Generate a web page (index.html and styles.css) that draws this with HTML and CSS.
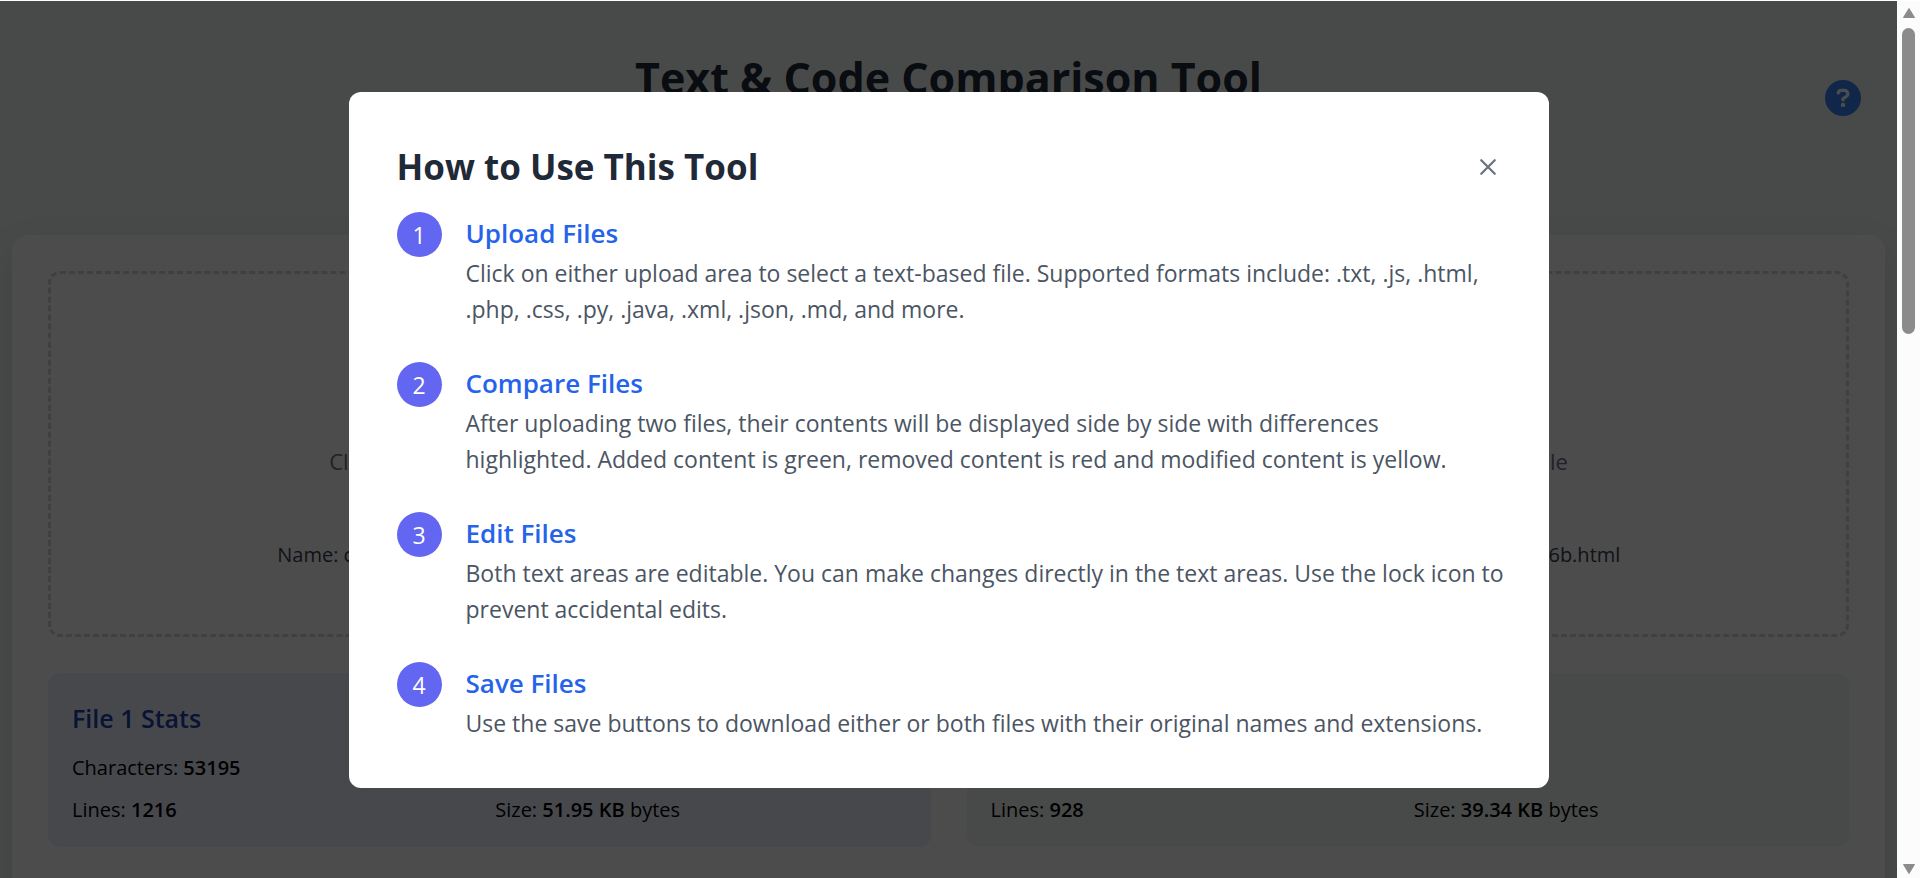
FILE: index.html
```html
<!DOCTYPE html>
<html lang="en">
<head>
  <meta charset="UTF-8">
  <meta name="viewport" content="width=device-width, initial-scale=1.0">
  <title>Text & Code Comparison Tool</title>
  <link rel="stylesheet" href="styles.css">
</head>
<body>
  <div class="viewport">
    <div class="page">
      <header class="header">
        <h1>Text &amp; Code Comparison Tool</h1>
        <button class="help-btn" id="help-btn" aria-label="Help">
          <svg viewBox="0 0 512 512" aria-hidden="true">
            <circle cx="256" cy="256" r="256" fill="#3b82f6"/>
            <path d="M188 184c4-28 24-36 46-36h40c30 0 52 20 52 47 0 22-12 35-28 44l-42 25v20" fill="none" stroke="#fff" stroke-width="46" stroke-linecap="round" stroke-linejoin="round"/>
            <circle cx="256" cy="354" r="31" fill="#fff"/>
          </svg>
        </button>
      </header>

      <main class="card">
        <div class="columns">
          <label class="upload">
            <input type="file" id="file1">
            <span class="upload-text">Click to upload another text file</span>
            <span class="file-name">Name: compare-tool-7d41c9e2a583f06b.html</span>
          </label>
          <label class="upload">
            <input type="file" id="file2">
            <span class="upload-text">Click to upload another text file</span>
            <span class="file-name">Name: compare-tool-2e90b7c4d168f06b.html</span>
          </label>
        </div>

        <div class="columns">
          <section class="stats stats-blue">
            <h3>File 1 Stats</h3>
            <div class="stats-grid">
              <div>Characters: <b>53195</b></div>
              <div>Words: <b>4120</b></div>
              <div>Lines: <b>1216</b></div>
              <div>Size: <b>51.95 KB</b> bytes</div>
            </div>
          </section>
          <section class="stats stats-green">
            <h3>File 2 Stats</h3>
            <div class="stats-grid">
              <div>Characters: <b>40284</b></div>
              <div>Words: <b>3056</b></div>
              <div>Lines: <b>928</b></div>
              <div>Size: <b>39.34 KB</b> bytes</div>
            </div>
          </section>
        </div>
      </main>
    </div>

    <!-- Help modal -->
    <div class="modal-overlay" id="help-modal">
      <div class="modal" role="dialog" aria-labelledby="modal-title">
        <div class="modal-header">
          <h2 id="modal-title">How to Use This Tool</h2>
          <button class="close-btn" id="close-btn" aria-label="Close">
            <svg viewBox="0 0 16 16" aria-hidden="true"><path d="M2 2l12 12M14 2L2 14"/></svg>
          </button>
        </div>
        <ol class="steps">
          <li>
            <span class="step-number">1</span>
            <div>
              <h3>Upload Files</h3>
              <p>Click on either upload area to select a text-based file. Supported formats include: .txt, .js, .html, .php, .css, .py, .java, .xml, .json, .md, and more.</p>
            </div>
          </li>
          <li>
            <span class="step-number">2</span>
            <div>
              <h3>Compare Files</h3>
              <p>After uploading two files, their contents will be displayed side by side with differences highlighted. Added content is green, removed content is red and modified content is yellow.</p>
            </div>
          </li>
          <li>
            <span class="step-number">3</span>
            <div>
              <h3>Edit Files</h3>
              <p>Both text areas are editable. You can make changes directly in the text areas. Use the lock icon to prevent accidental edits.</p>
            </div>
          </li>
          <li>
            <span class="step-number">4</span>
            <div>
              <h3>Save Files</h3>
              <p>Use the save buttons to download either or both files with their original names and extensions.</p>
            </div>
          </li>
        </ol>
      </div>
    </div>
  </div>

  <div class="scrollbar" aria-hidden="true">
    <svg class="scroll-arrow" viewBox="0 0 14 12"><path d="M7 1.500L12.500 10.500H1.500z"/></svg>
    <div class="scroll-track"><div class="scroll-thumb"></div></div>
    <svg class="scroll-arrow" viewBox="0 0 14 12"><path d="M7 10.500L1.500 1.500H12.500z"/></svg>
  </div>

  <script>
    const modal = document.getElementById('help-modal');

    document.getElementById('help-btn').addEventListener('click', () => {
      modal.hidden = false;
    });
    document.getElementById('close-btn').addEventListener('click', () => {
      modal.hidden = true;
    });
  </script>
</body>
</html>
```
FILE: styles.css
```css
* {
  margin: 0;
  padding: 0;
  box-sizing: border-box;
}

body {
  display: flex;
  height: 100vh;
  padding-top: 1px;
  overflow: hidden;
  background: #fff;
  font-family: 'Segoe UI', 'Open Sans', 'Noto Sans', sans-serif;
  color: #000;
}

button {
  border: none;
  background: none;
  cursor: pointer;
}

[hidden] {
  display: none !important;
}

.viewport {
  position: relative;
  flex: 1;
  overflow: hidden;
  background: #f0f7f4;
}

.page {
  padding: 0 12px;
}

/* Header */
.header {
  display: flex;
  align-items: center;
  height: 234px;
  padding: 0 24px 40px;
}

.header h1 {
  flex: 1;
  padding: 0 0 40px 36px;
  font-size: 43px;
  line-height: 60px;
  text-align: center;
  color: #1f2937;
}

.help-btn {
  width: 36px;
  height: 36px;
}

.help-btn svg {
  display: block;
}

/* Main card */
.card {
  display: grid;
  gap: 36px;
  min-height: 1200px;
  padding: 36px;
  align-content: start;
  background: #fff;
  border-radius: 16px;
  box-shadow: 0 12px 36px rgba(0, 0, 0, 0.1);
}

.columns {
  display: grid;
  grid-template-columns: 1fr 1fr;
  gap: 36px;
}

.upload {
  display: flex;
  flex-direction: column;
  align-items: center;
  justify-content: flex-end;
  gap: 61px;
  height: 366px;
  padding-bottom: 64px;
  border: 3px dashed #d1d5db;
  border-radius: 12px;
  cursor: pointer;
}

.upload input {
  display: none;
}

.upload-text {
  font-size: 22px;
  line-height: 36px;
  color: #6b7280;
}

.file-name {
  font-size: 20px;
  line-height: 30px;
  color: #374151;
}

.stats {
  padding: 24px 24px 22px;
  border-radius: 12px;
}

.stats-blue {
  background: #eef2ff;
}

.stats-green {
  background: #f0f7f4;
}

.stats h3 {
  margin-bottom: 14px;
  font-size: 25px;
  font-weight: 600;
  line-height: 42px;
}

.stats-blue h3 {
  color: #1e40af;
}

.stats-green h3 {
  color: #166534;
}

.stats-grid {
  display: grid;
  grid-template-columns: 1fr 1fr;
  gap: 12px;
  font-size: 20px;
  line-height: 30px;
}

.stats-grid b {
  font-weight: 600;
}

/* Modal */
.modal-overlay {
  position: absolute;
  inset: 0;
  display: flex;
  align-items: center;
  justify-content: center;
  background: rgba(0, 0, 0, 0.7);
}

.modal {
  width: 1200px;
  max-width: 90%;
  padding: 48px 42px 47px 48px;
  background: #fff;
  border-radius: 12px;
}

.modal-header {
  display: flex;
  align-items: center;
  justify-content: space-between;
  margin-bottom: 18px;
  padding-right: 6px;
}

.modal-header h2 {
  font-size: 35px;
  line-height: 54px;
  color: #1f2937;
}

.close-btn {
  width: 26px;
  height: 26px;
}

.close-btn svg {
  display: block;
  width: 18px;
  height: 18px;
  margin: auto;
}

.close-btn path {
  fill: none;
  stroke: #6b7280;
  stroke-width: 2;
  stroke-linecap: round;
}

.steps {
  display: grid;
  gap: 35px;
  list-style: none;
}

.steps li {
  display: flex;
  gap: 24px;
}

.step-number {
  flex-shrink: 0;
  width: 45px;
  height: 45px;
  border-radius: 50%;
  background: #6366f1;
  font-size: 23px;
  line-height: 46px;
  text-align: center;
  color: #fff;
}

.steps h3 {
  font-size: 26px;
  font-weight: 600;
  line-height: 43px;
  color: #2563eb;
}

.steps p {
  font-size: 23px;
  line-height: 36px;
  color: #4b5563;
}

/* Scrollbar */
.scrollbar {
  display: flex;
  flex-direction: column;
  align-items: center;
  width: 23px;
  padding: 6px 0 3px;
  background: #fcfcfc;
}

.scroll-arrow {
  width: 14px;
  height: 12px;
  fill: #8b8b8b;
  stroke: #8b8b8b;
  stroke-width: 1;
  stroke-linejoin: round;
}

.scroll-track {
  flex: 1;
  padding: 9px 0;
}

.scroll-thumb {
  width: 13px;
  height: 37%;
  border-radius: 7px;
  background: #8b8b8b;
}
```
